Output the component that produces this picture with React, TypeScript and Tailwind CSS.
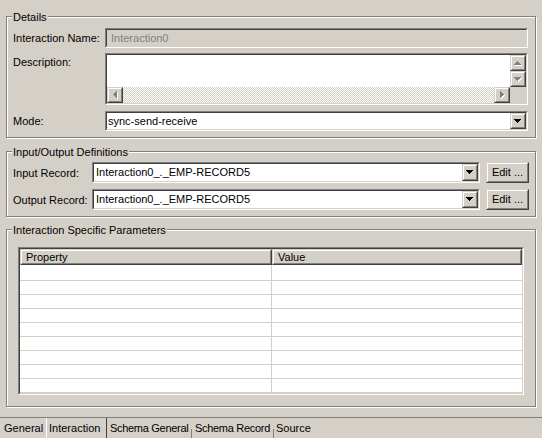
import React from "react";

type Dir = "up" | "down" | "left" | "right";

function ArrowShape({ dir, color, dx = 0, dy = 0 }: { dir: Dir; color: string; dx?: number; dy?: number }) {
  const rects: React.ReactNode[] = [];
  for (let i = 0; i < 4; i++) {
    if (dir === "down") rects.push(<rect key={i} x={i + dx} y={i + dy} width={7 - 2 * i} height={1} fill={color} />);
    if (dir === "up") rects.push(<rect key={i} x={3 - i + dx} y={i + dy} width={1 + 2 * i} height={1} fill={color} />);
    if (dir === "left") rects.push(<rect key={i} x={i + dx} y={3 - i + dy} width={1} height={1 + 2 * i} fill={color} />);
    if (dir === "right") rects.push(<rect key={i} x={i + dx} y={i + dy} width={1} height={7 - 2 * i} fill={color} />);
  }
  return <>{rects}</>;
}

function Arrow({ dir, disabled = false }: { dir: Dir; disabled?: boolean }) {
  const horiz = dir === "up" || dir === "down";
  const w = horiz ? 8 : 5;
  const h = horiz ? 5 : 8;
  return (
    <svg width={w} height={h} viewBox={`0 0 ${w} ${h}`} shapeRendering="crispEdges" className="block">
      {disabled && <ArrowShape dir={dir} color="#ffffff" dx={1} dy={1} />}
      <ArrowShape dir={dir} color={disabled ? "#808080" : "#000000"} />
    </svg>
  );
}

function Sunken({ className = "", innerClass = "", children }: { className?: string; innerClass?: string; children?: React.ReactNode }) {
  return (
    <div className={`border border-t-[#808080] border-l-[#808080] border-b-white border-r-white ${className}`}>
      <div className={`h-full w-full border border-t-[#404040] border-l-[#404040] border-b-[#d4d0c8] border-r-[#d4d0c8] ${innerClass}`}>
        {children}
      </div>
    </div>
  );
}

function Raised({ className = "", innerClass = "", children }: { className?: string; innerClass?: string; children?: React.ReactNode }) {
  return (
    <div className={`border border-t-[#d4d0c8] border-l-[#d4d0c8] border-b-[#404040] border-r-[#404040] bg-[#d4d0c8] ${className}`}>
      <div className={`h-full w-full border border-t-white border-l-white border-b-[#808080] border-r-[#808080] ${innerClass}`}>
        {children}
      </div>
    </div>
  );
}

function Group({ title, className = "", children }: { title: string; className?: string; children?: React.ReactNode }) {
  return (
    <div className={`relative ml-[6px] w-[530px] border border-[#808080] shadow-[1px_1px_0_#ffffff,inset_1px_1px_0_#ffffff] ${className}`}>
      <span className="absolute left-[5px] top-[-6px] px-[1px] bg-[#d4d0c8] leading-[13px]">{title}</span>
      {children}
    </div>
  );
}

function Combo({ value, className = "", padText = "pl-[1px]" }: { value: string; className?: string; padText?: string }) {
  return (
    <Sunken className={className} innerClass="bg-white flex items-stretch">
      <div className={`flex-1 flex items-center leading-[13px] ${padText}`}>{value}</div>
      <Raised className="w-[16px]" innerClass="flex items-center justify-center">
        <Arrow dir="down" />
      </Raised>
    </Sunken>
  );
}

const rows = Array.from({ length: 10 });

export default function App() {
  return (
    <div className="w-[542px] h-[438px] bg-[#d4d0c8] text-black text-[11px] font-['Liberation_Sans',Arial,sans-serif] overflow-hidden flex flex-col">
      {/* Details */}
      <Group title="Details" className="mt-[16px] h-[122px] pt-[11px] pl-[6px]">
        <div className="flex items-center h-[20px]">
          <div className="w-[92px] leading-[13px] pt-[1px]">Interaction Name:</div>
          <Sunken className="w-[423px] h-[20px]" innerClass="bg-[#d4d0c8] flex items-center pl-[4px] text-[#808080] leading-[13px]">
            Interaction0
          </Sunken>
        </div>
        <div className="flex mt-[5px]">
          <div className="w-[92px] leading-[13px] pt-[3px]">Description:</div>
          <Sunken className="w-[423px] h-[52px]" innerClass="grid grid-cols-[1fr_16px] grid-rows-[32px_16px]">
            <div className="bg-white" />
            <div className="flex flex-col">
              <Raised className="h-[16px]" innerClass="flex items-center justify-center">
                <Arrow dir="up" disabled />
              </Raised>
              <Raised className="h-[16px]" innerClass="flex items-center justify-center">
                <Arrow dir="down" disabled />
              </Raised>
            </div>
            <div className="flex">
              <Raised className="w-[16px]" innerClass="flex items-center justify-center">
                <Arrow dir="left" disabled />
              </Raised>
              <div className="flex-1 bg-[image:repeating-conic-gradient(#d4d0c8_0%_25%,#ffffff_0%_50%)] bg-[length:2px_2px]" />
              <Raised className="w-[16px]" innerClass="flex items-center justify-center">
                <Arrow dir="right" disabled />
              </Raised>
            </div>
            <div className="bg-[#d4d0c8]" />
          </Sunken>
        </div>
        <div className="flex items-center h-[20px] mt-[6px]">
          <div className="w-[92px] leading-[13px] pt-[1px]">Mode:</div>
          <Combo value="sync-send-receive" className="w-[423px] h-[20px]" />
        </div>
      </Group>

      {/* Input/Output */}
      <Group title="Input/Output Definitions" className="mt-[13px] h-[66px] pt-[10px] pl-[6px]">
        <div className="flex items-center h-[21px]">
          <div className="w-[79px] leading-[13px] pt-[1px]">Input Record:</div>
          <Combo value="Interaction0_._EMP-RECORD5" className="w-[388px] h-[21px]" padText="pl-[2px]" />
          <Raised className="ml-[6px] w-[43px] h-[21px]" innerClass="flex items-center justify-center leading-[13px]">
            Edit ...
          </Raised>
        </div>
        <div className="flex items-center h-[21px] mt-[6px]">
          <div className="w-[79px] leading-[13px] pt-[1px]">Output Record:</div>
          <Combo value="Interaction0_._EMP-RECORD5" className="w-[388px] h-[21px]" padText="pl-[2px]" />
          <Raised className="ml-[6px] w-[43px] h-[21px]" innerClass="flex items-center justify-center leading-[13px]">
            Edit ...
          </Raised>
        </div>
      </Group>

      {/* Interaction Specific Parameters */}
      <Group title="Interaction Specific Parameters" className="mt-[12px] h-[178px] pt-[17px] pl-[11px]">
        <Sunken className="w-[506px] h-[148px]" innerClass="bg-white overflow-hidden flex flex-col">
          <div className="flex h-[16px] shrink-0">
            <Raised className="w-[252px] h-[16px]" innerClass="flex items-center pl-[4px] leading-[13px]">
              Property
            </Raised>
            <Raised className="flex-1 h-[16px]" innerClass="flex items-center pl-[4px] leading-[13px]">
              Value
            </Raised>
          </div>
          {rows.map((_, i) => (
            <div key={i} className={`flex shrink-0 border-b border-[#d4d0c8] ${i === 0 ? "h-[16px]" : "h-[14px]"}`}>
              <div className="w-[252px] border-r border-[#d4d0c8]" />
              <div className="flex-1" />
            </div>
          ))}
        </Sunken>
      </Group>

      {/* Tabs */}
      <div className="mt-[10px] h-[1px] bg-[#808080] shrink-0" />
      <div className="flex h-[20px] shrink-0 leading-[19px] whitespace-nowrap">
        <div className="w-[46px] shrink-0 pl-[4px] pt-[1px]">General</div>
        <div className="w-[61px] shrink-0 pl-[2px] pt-[1px] border-l border-white border-r border-r-[#404040]">Interaction</div>
        <div className="w-[84px] shrink-0 pl-[3px] pt-[1px] tracking-[-0.3px]">Schema General</div>
        <div className="w-[1px] h-[9px] shrink-0 self-end bg-[#808080]" />
        <div className="w-[81px] shrink-0 pl-[3px] pt-[1px] tracking-[-0.3px]">Schema Record</div>
        <div className="w-[1px] h-[9px] shrink-0 self-end bg-[#808080]" />
        <div className="pl-[2px] pt-[1px]">Source</div>
      </div>
    </div>
  );
}
